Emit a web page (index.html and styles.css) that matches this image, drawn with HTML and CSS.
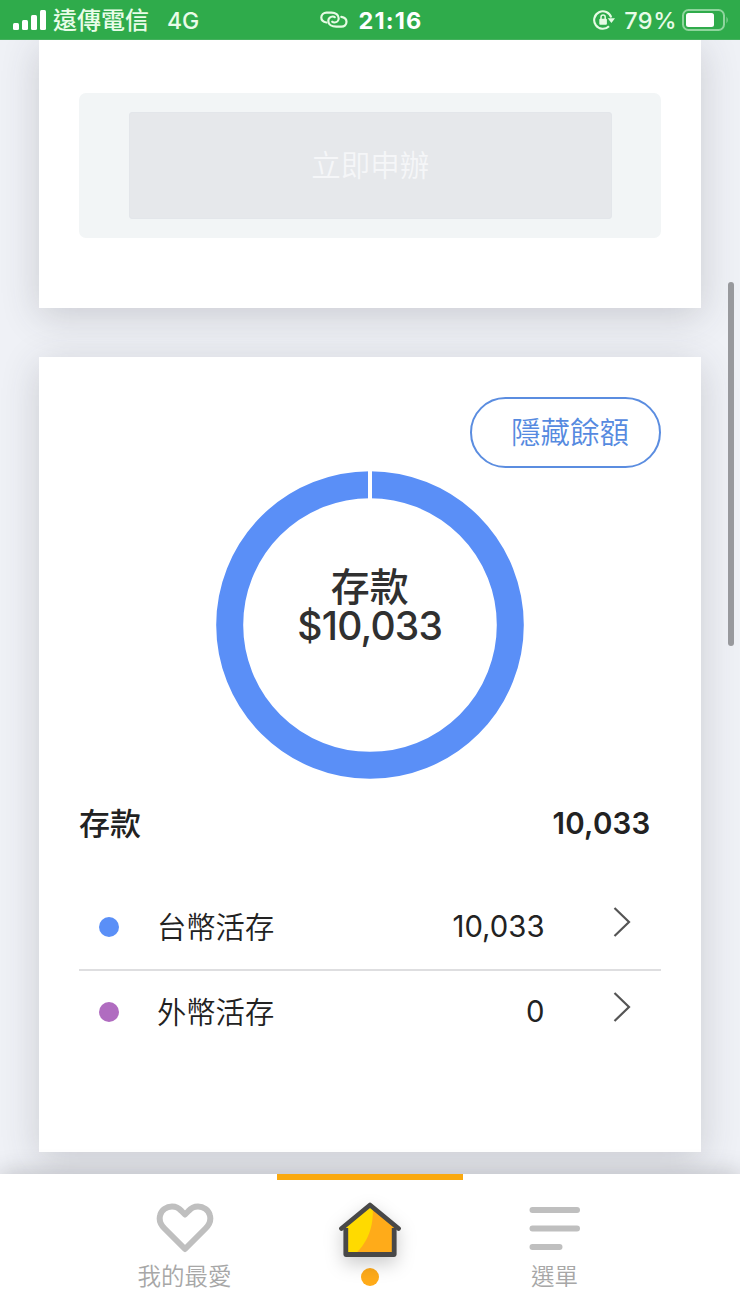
FILE: index.html
```html
<!DOCTYPE html>
<html lang="zh-Hant">
<head>
<meta charset="utf-8">
<title>存款</title>
<link rel="stylesheet" href="styles.css">
</head>
<body>
<header class="status">
  <div class="status-left">
    <svg class="signal" width="34" height="22" viewBox="0 0 34 22" fill="#fff"><rect x="0" y="14" width="6" height="7" rx="1.5"/><rect x="9" y="11" width="6" height="10" rx="1.5"/><rect x="18" y="6" width="6" height="15" rx="1.5"/><rect x="27" y="1" width="6" height="20" rx="1.5"/></svg>
    <span class="carrier">遠傳電信</span>
    <span class="network">4G</span>
  </div>
  <div class="status-center">
    <svg class="link" width="28" height="18" viewBox="0 0 28 18" fill="none" stroke="#e6fbe4" stroke-width="2.200" stroke-linecap="round"><path d="M6.500 11.500C3.500 11 1.300 9 1.300 6.500 1.300 3.600 3.700 1.600 6.500 1.600H11.500C15.500 1.600 18.700 4 18.700 7.200 18.700 9.800 16.800 11.500 14.500 11.500 13.500 11.500 12.700 11.200 12.200 10.700"/><path d="M21.300 5.800C24.500 6.300 26.500 8.300 26.500 10.800 26.500 13.700 24.300 15.700 21.300 15.700H16.300C11.800 15.700 8.300 13.500 8.300 10 8.300 7.400 10.300 5.500 12.800 5.500 13.700 5.500 14.300 5.700 14.800 6.200"/></svg>
    <span class="time">21:16</span>
  </div>
  <div class="status-right">
    <svg class="lock" width="22" height="22" viewBox="0 0 22 22" fill="none" stroke="#e6fbe4" stroke-width="2.100"><path d="M18.200 8.500A8.700 8.700 0 1 0 16 17.200"/><path d="M14.700 9.300H22L18.400 14Z" fill="#e6fbe4" stroke="none"/><rect x="6.300" y="9.800" width="7.600" height="6" rx="1" fill="#e6fbe4" stroke="none"/><path d="M8 10V8.200a2.100 2.100 0 0 1 4.200 0V10" stroke-width="1.500"/></svg>
    <span class="percent">79%</span>
    <svg class="battery" width="48" height="22" viewBox="0 0 48 22"><rect x="1" y="1" width="41" height="20" rx="5.500" fill="none" stroke="#8fd59d" stroke-width="2"/><rect x="4" y="4" width="28" height="14" rx="2.500" fill="#fff"/><path d="M44.500 7.500q2.500 3.500 0 7z" fill="#8fd59d"/></svg>
  </div>
</header>
<main class="page">
  <section class="card apply">
    <div class="apply-box"><button class="apply-button" disabled>立即申辦</button></div>
  </section>
  <section class="card deposit">
    <button class="hide-button">隱藏餘額</button>
    <div class="chart">
      <svg class="ring" width="308" height="308" viewBox="0 0 308 308"><circle cx="154" cy="154" r="140.300" fill="none" stroke="#5a8ff7" stroke-width="27"/><rect x="152" y="0" width="4" height="30" fill="#fff"/></svg>
      <div class="chart-label"><span>存款</span><span class="chart-amount">$10,033</span></div>
    </div>
    <div class="total"><span class="total-name">存款</span><span class="total-amount">10,033</span></div>
    <div class="row">
      <span class="dot blue"></span><span class="name">台幣活存</span><span class="amount">10,033</span>
      <svg class="chevron" width="18" height="32" viewBox="0 0 18 32"><path d="M1.500 2L16 16 1.500 30"/></svg>
    </div>
    <div class="row">
      <span class="dot purple"></span><span class="name">外幣活存</span><span class="amount">0</span>
      <svg class="chevron" width="18" height="32" viewBox="0 0 18 32"><path d="M1.500 2L16 16 1.500 30"/></svg>
    </div>
  </section>
  <div class="scrollbar"></div>
</main>
<nav class="tabs">
  <a class="tab">
    <svg width="58" height="50" viewBox="0 0 58 50" fill="none" stroke="#bfbfbf" stroke-width="6" stroke-linejoin="round"><path d="M29 46L8.500 25.500C4.500 21.500 2.700 17 4.200 12 5.500 7 10.500 3.500 16 3.500 20 3.500 23 5 25.500 8L29 11.500 32.500 8C35 5 38 3.500 42 3.500 47.500 3.500 52.500 7 53.800 12 55.300 17 53.500 21.500 49.500 25.500Z"/></svg>
    <span>我的最愛</span>
  </a>
  <a class="tab active">
    <svg class="house" width="64" height="60" viewBox="0 0 64 60"><path d="M7 25L32 5 57 25V54H7Z" fill="#ffab19"/><path d="M7 25L34.500 3C36 20 33 39 16 54H7Z" fill="#ffda00"/><path d="M7.800 27V53.500H56.200V27" fill="none" stroke="#484848" stroke-width="4.800" stroke-linejoin="round"/><path d="M3.500 27.500L32 4 60.500 27.500" fill="none" stroke="#484848" stroke-width="4.800" stroke-linejoin="round" stroke-linecap="round"/></svg>
    <i class="active-dot"></i>
  </a>
  <a class="tab">
    <svg width="52" height="50" viewBox="0 0 52 50" fill="none" stroke="#bfbfbf" stroke-width="6" stroke-linecap="round"><path d="M3.500 7H48M3.500 25.500H48M3.500 44H30.500"/></svg>
    <span>選單</span>
  </a>
</nav>
</body>
</html>
```
FILE: styles.css
```css
* { box-sizing: border-box; }
body {
  margin: 0;
  width: 740px;
  height: 1316px;
  overflow: hidden;
  display: flex;
  flex-direction: column;
  font-family: Inter, "Noto Sans CJK TC", sans-serif;
  color: #222;
  background: #eff1f6;
}
button { font: inherit; padding: 0; }
svg { display: block; flex: none; }

.status {
  flex: none;
  height: 40px;
  display: grid;
  grid-template-columns: 1fr auto 1fr;
  align-items: center;
  padding: 0 10px 0 13px;
  background: #2fab4b;
  border-bottom: 1px solid #45b15e;
  color: #e9fce8;
  font-size: 23px;
  font-weight: 500;
  line-height: 38px;
  z-index: 2;
}
.status-left, .status-center, .status-right { display: flex; align-items: center; }
.status-right { justify-content: flex-end; }
.carrier { margin: 2px 0 0 6px; font-size: 24px; }
.network { margin: 2px 0 0 18px; }
.link { margin-right: 10px; }
.time { font-weight: 700; font-size: 23.500px; color: #fff; letter-spacing: 1.200px; margin-top: 2px; }
.percent { margin: 2px 5px 0 9px; font-size: 23.500px; letter-spacing: .5px; }

.page {
  flex: 1;
  min-height: 0;
  position: relative;
  padding: 0 39.500px 0 39px;
  display: flex;
  flex-direction: column;
  gap: 49px;
}
.card {
  flex: none;
  padding: 0 40px;
  background: #fff;
  box-shadow: 0 8px 36px rgba(55, 55, 65, .2);
}
.apply { height: 268px; padding-top: 53px; }
.apply-box {
  height: 145px;
  padding: 19px 49px 19px 50px;
  border-radius: 7px;
  background: #f2f5f6;
}
.apply-button {
  display: block;
  width: 100%;
  height: 107px;
  padding-bottom: 5px;
  border: 1px solid #e3e6ea;
  border-radius: 3px;
  background: #e6e8eb;
  color: #f5f6f8;
  font-size: 29.500px;
  font-weight: 350;
}

.deposit {
  height: 795px;
  padding-top: 39.500px;
  display: flex;
  flex-direction: column;
}
.hide-button {
  align-self: flex-end;
  width: 191px;
  height: 71px;
  padding: 0 0 5px 10px;
  border: 2px solid #5b8de0;
  border-radius: 36px;
  background: #fff;
  color: #568ae0;
  font-size: 29.500px;
  font-weight: 350;
}
.chart {
  align-self: center;
  display: grid;
  margin-top: 3.500px;
}
.chart > * { grid-area: 1 / 1; }
.chart-label {
  display: flex;
  flex-direction: column;
  align-items: center;
  padding-top: 96px;
  color: #303030;
  font-size: 39px;
  font-weight: 500;
  line-height: 39px;
}
.chart-amount { letter-spacing: -.8px; }
.total {
  display: flex;
  justify-content: space-between;
  align-items: center;
  height: 90px;
  padding: 0 10px 2px 0;
  font-size: 31px;
  font-weight: 500;
}
.total-name { margin-top: -3px; }
.total-amount { font-size: 29.500px; font-weight: 600; letter-spacing: .2px; }
.row {
  height: 82px;
  display: flex;
  align-items: center;
  padding: 0 28px 0 20px;
  font-size: 29.300px;
  font-weight: 350;
}
.total + .row {
  height: 102px;
  padding-top: 16px;
  border-bottom: 2px solid #dedee0;
}
.dot { width: 20px; height: 20px; border-radius: 50%; }
.blue { background: #5a8ff7; }
.purple { background: #b06cc0; }
.name { margin: -4px 0 0 38px; }
.amount { margin: -1px 0 0 auto; font-weight: 370; }
.chevron {
  margin: 0 2px 11px 68px;
  fill: none;
  stroke: #555;
  stroke-width: 2.200;
}
.scrollbar {
  position: absolute;
  top: 242px;
  right: 6px;
  width: 6px;
  height: 364px;
  border-radius: 3px;
  background: #98999d;
}

.tabs {
  flex: none;
  height: 142px;
  display: grid;
  grid-template-columns: 185px 186px 183px;
  justify-content: center;
  padding-right: 2px;
  background: #fff;
  box-shadow: 0 -3px 20px rgba(50, 50, 60, .22);
  z-index: 1;
}
.tab {
  display: flex;
  flex-direction: column;
  align-items: center;
  padding-top: 29px;
  color: #a7a7a7;
  font-size: 23.500px;
  font-weight: 350;
  line-height: 34px;
}
.tab span { margin-top: 7px; }
.active { padding-top: 21px; border-top: 6px solid #faa90f; }
.house { filter: drop-shadow(0 7px 9px rgba(0, 0, 0, .2)); }
.active-dot {
  width: 18px;
  height: 18px;
  margin-top: 7px;
  border-radius: 50%;
  background: #ffab19;
}
```
